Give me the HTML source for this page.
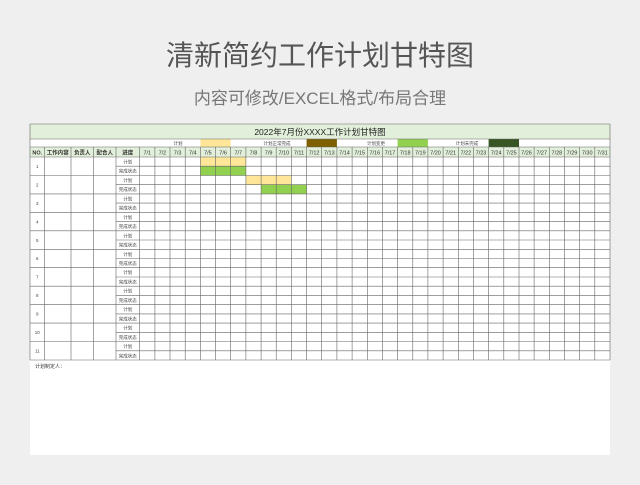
<!DOCTYPE html>
<html><head><meta charset="utf-8"><style>
html,body{margin:0;padding:0;width:640px;height:485px;background:#efefef;overflow:hidden}
.t{position:absolute;left:0;width:640px;text-align:center;font-family:"Liberation Sans","Noto Sans CJK SC",sans-serif}
</style></head><body>
<div class="t" style="top:34px;font-size:28px;color:#555;letter-spacing:0px">清新简约工作计划甘特图</div>
<div class="t" style="top:84px;font-size:17px;color:#777">内容可修改/EXCEL格式/布局合理</div>
<svg style="position:absolute;left:0;top:0" width="640" height="485" font-family="Liberation Sans,Noto Sans CJK SC,sans-serif">
<rect x="30" y="124" width="580" height="331" fill="#fff"/>
<rect x="30" y="124" width="580" height="15" fill="#e2efda"/>
<rect x="30" y="147" width="580" height="10" fill="#e2efda"/>
<rect x="200.4" y="139" width="30.3" height="8" fill="#ffe699"/>
<rect x="306.6" y="139" width="30.3" height="8" fill="#7f6000"/>
<rect x="397.6" y="139" width="30.3" height="8" fill="#92d050"/>
<rect x="488.6" y="139" width="30.4" height="8" fill="#375623"/>
<rect x="200.4" y="157" width="45.5" height="9.2" fill="#ffe699"/>
<rect x="200.4" y="166.2" width="45.5" height="9.3" fill="#92d050"/>
<rect x="245.9" y="175.5" width="45.5" height="9.2" fill="#ffe699"/>
<rect x="261.1" y="184.7" width="45.5" height="9.2" fill="#92d050"/>
<g stroke="#666" stroke-width="0.6" fill="none">
<path d="M30 124H610M30 139H610M30 147H610M30 157H610M30 124V147M610 124V147"/>
<path d="M30 147V360M44.7 147V360M71 147V360M93.7 147V360M116 147V360M139.7 147V360M154.9 147V360M170 147V360M185.2 147V360M200.4 147V360M215.5 147V360M230.7 147V360M245.9 147V360M261.1 147V360M276.2 147V360M291.4 147V360M306.6 147V360M321.7 147V360M336.9 147V360M352.1 147V360M367.3 147V360M382.4 147V360M397.6 147V360M412.8 147V360M427.9 147V360M443.1 147V360M458.3 147V360M473.4 147V360M488.6 147V360M503.8 147V360M519 147V360M534.1 147V360M549.3 147V360M564.5 147V360M579.6 147V360M594.8 147V360M610 147V360"/>
<path d="M116 166.2H610M30 175.5H610M116 184.7H610M30 193.9H610M116 203.1H610M30 212.4H610M116 221.6H610M30 230.8H610M116 240H610M30 249.3H610M116 258.5H610M30 267.7H610M116 277H610M30 286.2H610M116 295.4H610M30 304.6H610M116 313.9H610M30 323.1H610M116 332.3H610M30 341.5H610M116 350.8H610M30 360H610"/>
</g>
<text x="320" y="135" font-size="8.5" text-anchor="middle" fill="#222">2022年7月份XXXX工作计划甘特图</text>
<g font-size="4.5" fill="#444" text-anchor="middle">
<text x="178" y="145">计划</text><text x="277" y="145">计划正常完成</text><text x="376" y="145">计划变更</text><text x="467" y="145">计划未完成</text>
</g>
<g font-size="5.5" fill="#333" text-anchor="middle" font-weight="bold">
<text x="37.3" y="154.5">NO.</text><text x="57.8" y="154.5">工作内容</text><text x="82.3" y="154.5">负责人</text><text x="104.8" y="154.5">配合人</text><text x="127.8" y="154.5">进度</text>
</g>
<g font-size="5.5" fill="#333" text-anchor="middle">
<text x="147.3" y="154.5">7/1</text><text x="162.4" y="154.5">7/2</text><text x="177.6" y="154.5">7/3</text><text x="192.8" y="154.5">7/4</text><text x="207.9" y="154.5">7/5</text><text x="223.1" y="154.5">7/6</text><text x="238.3" y="154.5">7/7</text><text x="253.5" y="154.5">7/8</text><text x="268.6" y="154.5">7/9</text><text x="283.8" y="154.5">7/10</text><text x="299" y="154.5">7/11</text><text x="314.1" y="154.5">7/12</text><text x="329.3" y="154.5">7/13</text><text x="344.5" y="154.5">7/14</text><text x="359.7" y="154.5">7/15</text><text x="374.8" y="154.5">7/16</text><text x="390" y="154.5">7/17</text><text x="405.2" y="154.5">7/18</text><text x="420.3" y="154.5">7/19</text><text x="435.5" y="154.5">7/20</text><text x="450.7" y="154.5">7/21</text><text x="465.8" y="154.5">7/22</text><text x="481" y="154.5">7/23</text><text x="496.2" y="154.5">7/24</text><text x="511.4" y="154.5">7/25</text><text x="526.5" y="154.5">7/26</text><text x="541.7" y="154.5">7/27</text><text x="556.9" y="154.5">7/28</text><text x="572" y="154.5">7/29</text><text x="587.2" y="154.5">7/30</text><text x="602.4" y="154.5">7/31</text>
</g>
<g font-size="4.5" fill="#444" text-anchor="middle">
<text x="37.3" y="168">1</text><text x="37.3" y="186.4">2</text><text x="37.3" y="204.9">3</text><text x="37.3" y="223.3">4</text><text x="37.3" y="241.8">5</text><text x="37.3" y="260.2">6</text><text x="37.3" y="278.7">7</text><text x="37.3" y="297.1">8</text><text x="37.3" y="315.6">9</text><text x="37.3" y="334">10</text><text x="37.3" y="352.5">11</text>
<text x="127.8" y="163.5">计划</text><text x="127.8" y="172.7">完成状态</text>
<text x="127.8" y="182">计划</text><text x="127.8" y="191.2">完成状态</text>
<text x="127.8" y="200.4">计划</text><text x="127.8" y="209.6">完成状态</text>
<text x="127.8" y="218.9">计划</text><text x="127.8" y="228.1">完成状态</text>
<text x="127.8" y="237.3">计划</text><text x="127.8" y="246.5">完成状态</text>
<text x="127.8" y="255.8">计划</text><text x="127.8" y="265">完成状态</text>
<text x="127.8" y="274.2">计划</text><text x="127.8" y="283.5">完成状态</text>
<text x="127.8" y="292.7">计划</text><text x="127.8" y="301.9">完成状态</text>
<text x="127.8" y="311.1">计划</text><text x="127.8" y="320.4">完成状态</text>
<text x="127.8" y="329.6">计划</text><text x="127.8" y="338.8">完成状态</text>
<text x="127.8" y="348">计划</text><text x="127.8" y="357.3">完成状态</text>
</g>
<text x="35" y="368" font-size="5" fill="#333">计划制定人：</text>
</svg>
</body></html>
